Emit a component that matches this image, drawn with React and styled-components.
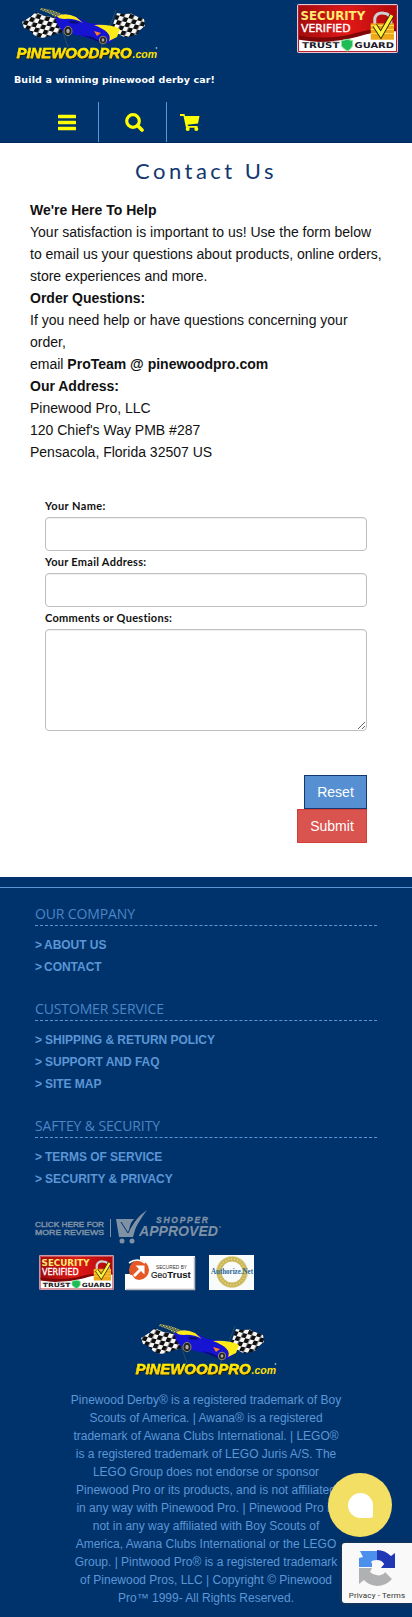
import React from "react";
import styled, { createGlobalStyle } from "styled-components";

const navy = "#00336c";
const sky = "#5b96d6";

const Global = createGlobalStyle`
  * { box-sizing: border-box; }
  body { margin: 0; background: #fff; font-family: "Liberation Sans", Arial, sans-serif; font-size: 14px; line-height: 22px; color: #111; }
`;

const Page = styled.div`width: 412px; height: 1617px; overflow: hidden; position: relative;`;
const Header = styled.header`height: 143px; background: ${navy}; border-bottom: 1px solid #002860; display: flex; flex-direction: column;`;
const Brand = styled.div`display: flex; justify-content: space-between; align-items: flex-start; height: 64px; padding: 4px 14px 0;`;
const Tagline = styled.p`
  margin: 5px 0 0; padding-left: 14px; height: 20px; line-height: 21px; white-space: nowrap;
  font-family: "DejaVu Sans", sans-serif; font-weight: 700; font-size: 9.5px; letter-spacing: 0.13px; color: #fff;
`;
const Nav = styled.nav`display: flex; height: 40px; margin-top: 13px;`;
const NavItem = styled.a`
  width: ${(p) => p.$w}px; padding-left: ${(p) => p.$pad}px; display: flex; align-items: center;
  border-right: ${(p) => (p.$last ? "0" : `1px solid ${sky}`)};
`;
const Main = styled.main`height: 734px; display: flex; flex-direction: column;`;
const Title = styled.h1`
  margin: 16px 0 0; height: 24px; line-height: 23px; text-align: center; color: #12386f;
  font-family: Lato, sans-serif; font-weight: 400; font-size: 22px; letter-spacing: 3.5px;
`;
const Copy = styled.section`padding: 16px 20px 0 30px; height: 296px; white-space: nowrap;`;
const Form = styled.form`display: flex; flex-direction: column; padding: 0 45px; margin-top: 16px;`;
const Label = styled.label`
  height: 22px; line-height: 22px; color: #111; font-family: Lato, sans-serif; font-weight: 700;
  font-size: 11px; letter-spacing: ${(p) => p.$track}px;
`;
const Input = styled.input`height: 34px; border: 1px solid #bfbfbf; border-radius: 4px; box-shadow: inset 0 1px 1px rgba(0,0,0,.06); background: #fff;`;
const Area = styled.textarea`height: 102px; border: 1px solid #bfbfbf; border-radius: 4px; box-shadow: inset 0 1px 1px rgba(0,0,0,.06); resize: vertical;`;
const Actions = styled.div`display: flex; flex-direction: column; align-items: flex-end; margin-top: 44px;`;
const Button = styled.button`
  height: 34px; width: ${(p) => p.$w}px; padding: 0; border: 1px solid ${(p) => p.$edge}; background: ${(p) => p.$bg};
  color: #fff; font: 14px "Liberation Sans", Arial, sans-serif;
`;
const Footer = styled.footer`height: 740px; background: ${navy}; padding-top: 10px;`;
const FooterBody = styled.div`border-top: 1px solid ${sky}; padding: 16px 35px 0;`;
const Group = styled.section`height: ${(p) => p.$h}px;`;
const GroupTitle = styled.h2`
  margin: 0 0 8px; height: 22px; line-height: 20px; border-bottom: 1px dashed ${sky}; color: #4b85c6;
  font-family: "Open Sans", sans-serif; font-weight: 400; font-size: 14px; letter-spacing: -0.13px;
`;
const FooterLink = styled.a`display: flex; gap: 3px; height: 22px; line-height: 22px; color: ${sky}; font-size: 12px; font-weight: 700;`;
const LinkText = styled.span`margin-left: ${(p) => (p.$tight ? -1 : 0)}px; letter-spacing: -0.03px;`;
const Badges = styled.div`display: flex; align-items: center; gap: 11px; padding-left: 4px; margin-top: 10px; height: 35px;`;
const Reviews = styled.div`height: 36px; display: flex;`;
const FooterLogo = styled.div`display: flex; justify-content: center; margin-top: 30px;`;
const Legal = styled.p`margin: 13px -10px 0; text-align: center; color: ${sky}; font-size: 12px; line-height: 18px; white-space: nowrap;`;
const Chat = styled.div`position: absolute; left: 328px; top: 1473px; width: 64px; height: 64px; border-radius: 50%; background: #f3df63; display: grid; place-items: center;`;
const ChatDrop = styled.div`width: 25px; height: 25px; background: #fff; border-radius: 50% 50% 3px 50%;`;
const Captcha = styled.aside`
  position: absolute; right: 0; top: 1543px; width: 70px; height: 60px; background: #f9f9f9; border-radius: 3px 0 0 3px;
  box-shadow: 0 0 4px rgba(60,60,60,.8); display: flex; flex-direction: column; align-items: center; padding-top: 6px;
`;
const CaptchaText = styled.span`font: 8px/12px Roboto, sans-serif; color: #333; margin-top: 3px; letter-spacing: 0.15px; white-space: nowrap;`;

function Logo({ id }) {
  return (
    <svg width="146" height="58" viewBox="14 4 146 58">
      <defs>
        <pattern id={id + "c"} width="9" height="9" patternUnits="userSpaceOnUse" patternTransform="rotate(14) skewX(-12)">
          <rect width="9" height="9" fill="#f7f7f7" />
          <rect width="4.5" height="4.5" fill="#101010" />
          <rect x="4.5" y="4.5" width="4.5" height="4.5" fill="#101010" />
        </pattern>
        <pattern id={id + "t"} width="3" height="3" patternUnits="userSpaceOnUse" patternTransform="rotate(15)">
          <rect width="3" height="3" fill="#172b32" />
          <rect width="1.5" height="1.5" fill="#e8e45a" />
          <rect x="1.5" y="1.5" width="1.5" height="1.5" fill="#b8c9b0" />
        </pattern>
        <linearGradient id={id + "g"} x1="0" y1="0" x2="0" y2="1">
          <stop offset="0.2" stopColor="#fff500" />
          <stop offset="0.85" stopColor="#ffc516" />
        </linearGradient>
        <filter id={id + "s"} x="-5%" y="-10%" width="110%" height="130%">
          <feDropShadow dx="1" dy="1" stdDeviation="0" floodColor="#202400" />
        </filter>
      </defs>
      <path d="M22 22 Q31 17 36 12 Q46 18 57 17 L63 32 Q54 34 47 37 Q40 39 34 35 Q30 29 24 28Z" fill={`url(#${id}c)`} />
      <path d="M117 13 Q126 15 130 13 Q137 17 144 19 L145 26 Q138 31 137 34 Q130 38 124 37 L111 30Z" fill={`url(#${id}c)`} />
      <path d="M40 8 Q52 9 64 15 L58 19 Q50 13 40 10Z" fill={`url(#${id}t)`} />
      <path d="M60 24 L68 47 M116 10 L101 48" stroke="#48524f" strokeWidth="0.7" />
      <path d="M55 17 Q62 13 71 15 Q80 18 88 23 L105 25 Q114 27 119 30 L115 37 Q112 44 104 43 L81 36 L64 32 Q57 27 55 17Z" fill="#1613d2" />
      <path d="M57 16 Q66 12 76 17 L83 23 Q74 18 65 19 Q58 19 57 16Z" fill="#ffec17" />
      <path d="M94 25 Q110 24 120 29 L117 37 L109 41 Q113 32 94 25Z" fill="#ffec17" />
      <path d="M69 21 Q75 20 80 23 Q75 24 70 23Z" fill="#080e73" />
      <path d="M82 35 L92 37 L101 42 L99 42Z" fill="#0a0d63" />
      <path d="M94 31 L101 33 L97 36Z" fill="#ff7d28" />
      <g fill="#25231b" stroke="#8a8877" strokeWidth="1">
        <ellipse cx="68" cy="31" rx="4" ry="4.7" /><ellipse cx="103" cy="40" rx="3.7" ry="3.8" />
      </g>
      <ellipse cx="68" cy="31" rx="1.7" ry="2.2" fill="#aaa" /><ellipse cx="103" cy="40" rx="1.4" ry="1.8" fill="#aaa" />
      <text x="16.5" y="58" fontFamily="Liberation Sans" fontWeight="700" fontStyle="italic" fontSize="15" textLength="115" lengthAdjust="spacingAndGlyphs" fill={`url(#${id}g)`} stroke="#ffe600" strokeWidth="0.4" filter={`url(#${id}s)`}>PINEWOODPRO</text>
      <text x="132.5" y="58" fontFamily="Liberation Sans" fontWeight="700" fontStyle="italic" fontSize="10.5" textLength="24.5" lengthAdjust="spacingAndGlyphs" fill="#ffe000">.com</text>
      <circle cx="156.5" cy="48" r="0.9" fill="#79c2b7" />
    </svg>
  );
}

function TrustGuard({ id, width = 101, height = 49 }) {
  return (
    <svg width={width} height={height} viewBox="0 0 100 48" preserveAspectRatio="none">
      <defs>
        <linearGradient id={id} x2="1" y2="0"><stop stopColor="#a30b0b" /><stop offset=".5" stopColor="#e01918" /><stop offset="1" stopColor="#b00808" /></linearGradient>
      </defs>
      <rect x=".5" y=".5" width="99" height="47" rx="1.5" fill="#fff" stroke="#e8c5cf" />
      <path d="M2 2H98V26Q78 25 60 31Q35 40 2 33Z" fill={`url(#${id})`} />
      <path d="M2 31Q34 36 60 28Q78 23 98 24V27Q78 27 62 32Q35 41 2 35Z" fill="#7f0707" />
      <path d="M2 36Q34 39 60 32Q78 26 98 27V37H2Z" fill="#fff" />
      <rect x="1.5" y="1.5" width="97" height="45" fill="none" stroke="#b51d2c" />
      <text x="3.5" y="15.5" fontFamily="DejaVu Sans" fontWeight="700" fontSize="11.5" textLength="64" lengthAdjust="spacingAndGlyphs" fill="#ffec70">SECURITY</text>
      <text x="4" y="27.5" fontFamily="DejaVu Sans" fontSize="11" textLength="49" lengthAdjust="spacingAndGlyphs" fill="#fff" stroke="#fff" strokeWidth=".4">VERIFIED</text>
      <path d="M77 22V14Q79 8 86 9Q93 9 93 18V22" fill="none" stroke="#ccd1d3" strokeWidth="3" />
      <rect x="73" y="19" width="23" height="16" fill="#eea817" /><path d="M73 21H96M73 25H96M73 29H96" stroke="#ffda52" />
      <path d="M77 21L83 30L94 11" fill="none" stroke="#2c2700" strokeWidth="5" />
      <path d="M77 21L83 30L94 11" fill="none" stroke="#fff33d" strokeWidth="3.2" />
      <text x="5" y="43.5" fontFamily="DejaVu Sans" fontWeight="700" fontSize="7.8" textLength="37" lengthAdjust="spacingAndGlyphs" fill="#211926">TRUST</text>
      <path d="M44 36L50 34.5L55 36V41Q53 45 50 46Q45 43 44 41Z" fill="#20bb54" stroke="#8be5a1" />
      <text x="57" y="43.5" fontFamily="DejaVu Sans" fontWeight="700" fontSize="7.8" textLength="39" lengthAdjust="spacingAndGlyphs" fill="#211926">GUARD</text>
    </svg>
  );
}

function ShopperApproved() {
  const c = "#7f91a5";
  return (
    <svg width="210" height="36" viewBox="0 0 210 36" fill={c} fontFamily="Liberation Sans" overflow="visible">
      <text x="0" y="18" fontSize="7.2" stroke={c} strokeWidth=".4" textLength="69" lengthAdjust="spacingAndGlyphs">CLICK HERE FOR</text>
      <text x="0" y="26" fontSize="7.2" stroke={c} strokeWidth=".4" textLength="69" lengthAdjust="spacingAndGlyphs">MORE REVIEWS</text>
      <path d="M75.5 10V28" stroke={c} />
      <path d="M81 10H99L96 14L94 20L102 14L98 28H84Z" />
      <path d="M87 13L94 23Q99 10 112 1Q103 13 96 28Q91 25 87 13Z" />
      <path d="M86 13L93 24Q98 12 106 5" fill="none" stroke={navy} strokeWidth="1" />
      <circle cx="87" cy="32" r="2.5" /><circle cx="97" cy="32" r="2.5" />
      <text x="121" y="14" fontSize="8.5" fontWeight="700" fontStyle="italic" stroke={c} strokeWidth=".3" textLength="52" lengthAdjust="spacing">SHOPPER</text>
      <text x="104" y="27" fontSize="14" fontWeight="700" fontStyle="italic" textLength="79" lengthAdjust="spacingAndGlyphs">APPROVED</text>
      <circle cx="185" cy="18" r=".8" />
    </svg>
  );
}

function GeoTrust() {
  return (
    <svg width="73" height="36" viewBox="1 0 73 36">
      <path d="M16 1H71V35H1V19H6Q6 9 16 5Z" fill="#fff" />
      <path d="M2 34.5H70.5V2" fill="none" stroke="#b8b8c0" strokeWidth="1.5" />
      <circle cx="15" cy="15" r="10" fill="#e65925" />
      <path d="M3 20H8L12 25L9 26Q4 25 3 20Z" fill="#fff" />
      <path d="M9 20L15 14L11.5 10.5H20.5V19.5L17 16L11 22" fill="#fff" /><path d="M5 8Q13 2 21 8" fill="none" stroke="#fff" strokeWidth="1.6" />
      <text x="32" y="14" fontFamily="Liberation Sans" fontSize="5" textLength="31" lengthAdjust="spacingAndGlyphs" fill="#333">SECURED BY</text>
      <text x="27" y="22.5" fontFamily="Liberation Sans" fontSize="9.5" fill="#222" textLength="16" lengthAdjust="spacingAndGlyphs" stroke="#222" strokeWidth=".2">Geo</text>
      <text x="43.3" y="22.5" fontFamily="Liberation Sans" fontSize="9.5" fontWeight="700" fill="#111" textLength="23.5" lengthAdjust="spacingAndGlyphs">Trust</text>
    </svg>
  );
}

function AuthorizeNet() {
  return (
    <svg width="45" height="35" viewBox="0 0 45 35">
      <rect width="45" height="35" fill="#f8fbfa" />
      <circle cx="23" cy="17" r="13" fill="none" stroke="#cbb759" strokeWidth="5" />
      <circle cx="23" cy="17" r="15.5" fill="none" stroke="#ddd49a" strokeWidth="1" strokeDasharray="2 1" />
      <circle cx="23" cy="17" r="13" fill="none" stroke="#e2d481" strokeWidth="2" strokeDasharray="1 2" />
      <text x="2" y="19" fontFamily="Liberation Serif" fontWeight="700" fontSize="7.5" textLength="42" lengthAdjust="spacingAndGlyphs" fill="#286597">Authorize.Net</text>
    </svg>
  );
}

const groups = [
  { title: "OUR COMPANY", h: 95, tight: true, links: ["ABOUT US", "CONTACT"] },
  { title: "CUSTOMER SERVICE", h: 117, links: ["SHIPPING & RETURN POLICY", "SUPPORT AND FAQ", "SITE MAP"] },
  { title: "SAFTEY & SECURITY", h: 93, links: ["TERMS OF SERVICE", "SECURITY & PRIVACY"] },
];

const legal = [
  "Pinewood Derby® is a registered trademark of Boy",
  "Scouts of America. | Awana® is a registered",
  "trademark of Awana Clubs International. | LEGO®",
  "is a registered trademark of LEGO Juris A/S. The",
  "LEGO Group does not endorse or sponsor",
  "Pinewood Pro or its products, and is not affiliated",
  "in any way with Pinewood Pro. | Pinewood Pro is",
  "not in any way affiliated with Boy Scouts of",
  "America, Awana Clubs International or the LEGO",
  "Group. | Pintwood Pro® is a registered trademark",
  "of Pinewood Pros, LLC | Copyright © Pinewood",
  "Pro™ 1999- All Rights Reserved.",
];

export default function App() {
  return (
    <Page>
      <Global />
      <Header>
        <Brand><Logo id="top" /><TrustGuard id="tgTop" /></Brand>
        <Tagline>Build a winning pinewood derby car!</Tagline>
        <Nav>
          <NavItem $w={99} $pad={58}>
            <svg width="18" height="17" viewBox="0 0 18 17"><path d="M1 2.5H17M1 8.5H17M1 14.5H17" stroke="#ff0" strokeWidth="3.4" strokeLinecap="round" /></svg>
          </NavItem>
          <NavItem $w={68} $pad={26}>
            <svg width="19" height="20" viewBox="0 0 19 20" fill="none" stroke="#ff0"><circle cx="8" cy="9" r="6.3" strokeWidth="3.2" /><path d="M12.5 13.5L17 18" strokeWidth="3.6" strokeLinecap="round" /></svg>
          </NavItem>
          <NavItem $w={245} $pad={13} $last>
            <svg width="20" height="18" viewBox="0 0 20 18" fill="#ff0"><path d="M0 1H4.5L5 3H19.5L18 10.5L7.5 11.7L8 13H17.5V14.8H6L3.5 3H0Z" /><circle cx="7.7" cy="16" r="2" /><circle cx="16.3" cy="16" r="2" /></svg>
          </NavItem>
        </Nav>
      </Header>
      <Main>
        <Title>Contact Us</Title>
        <Copy>
          <b>We're Here To Help</b><br />
          Your satisfaction is important to us! Use the form below<br />
          to email us your questions about products, online orders,<br />
          store experiences and more.<br />
          <b>Order Questions:</b><br />
          If you need help or have questions concerning your<br />
          order,<br />
          email <b>ProTeam @ pinewoodpro.com</b><br />
          <b>Our Address:</b><br />
          Pinewood Pro, LLC<br />
          120 Chief's Way PMB #287<br />
          Pensacola, Florida 32507 US
        </Copy>
        <Form>
          <Label htmlFor="name" $track={0.4}>Your Name:</Label><Input id="name" />
          <Label htmlFor="email" $track={0.28}>Your Email Address:</Label><Input id="email" />
          <Label htmlFor="comments" $track={0.27}>Comments or Questions:</Label><Area id="comments" />
          <Actions>
            <Button type="reset" $w={63} $bg="#5690d3" $edge="#12386f">Reset</Button>
            <Button type="button" $w={70} $bg="#d9534f" $edge="#d43f3a">Submit</Button>
          </Actions>
        </Form>
      </Main>
      <Footer>
        <FooterBody>
          {groups.map((g) => (
            <Group key={g.title} $h={g.h}>
              <GroupTitle>{g.title}</GroupTitle>
              {g.links.map((l) => <FooterLink key={l}><span>&gt;</span><LinkText $tight={g.tight}>{l}</LinkText></FooterLink>)}
            </Group>
          ))}
          <Reviews><ShopperApproved /></Reviews>
          <Badges><TrustGuard id="tgBottom" width={75} height={35} /><GeoTrust /><AuthorizeNet /></Badges>
          <FooterLogo><Logo id="bottom" /></FooterLogo>
          <Legal>{legal.map((t) => <React.Fragment key={t}>{t}<br /></React.Fragment>)}</Legal>
        </FooterBody>
      </Footer>
      <Chat><ChatDrop /></Chat>
      <Captcha>
        <svg width="38" height="38" viewBox="0 0 38 38">
          <path d="M1 18V9L5 8L2 2H19V11Q14 11 13 13L17 18Z" fill="#4a90ec" />
          <path d="M19 1Q27 1 33 7L37 4V19H23L26 15Q24 11 19 11Z" fill="#2138b5" />
          <path d="M1 19H14L12 23Q16 27 21 26Q26 26 27 23L34 30Q28 37 19 37Q10 36 6 31L1 35Z" fill="#b0b1b3" />
          <path d="M14 13L18 16L22 12L26 15L22 19L25 23L21 27L18 22L14 24Z" fill="#f9f9f9" />
        </svg>
        <CaptchaText>Privacy - Terms</CaptchaText>
      </Captcha>
    </Page>
  );
}
